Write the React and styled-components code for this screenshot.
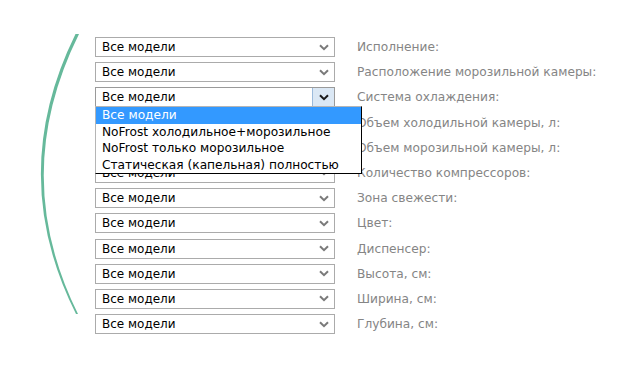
import React from "react";
import styled, { createGlobalStyle } from "styled-components";

const Global = createGlobalStyle`
  html, body { margin: 0; padding: 0; background: #fff; }
  body { width: 627px; height: 378px; overflow: hidden; }
`;

const Page = styled.div`
  display: flex;
  padding-top: 32px;
`;

const ArcColumn = styled.div`
  width: 95px;
  flex: none;
`;

const Form = styled.div`
  display: flex;
  flex-direction: column;
  gap: 5.2px;
  margin-top: 5px;
`;

const Row = styled.div`
  display: flex;
  align-items: center;
  height: 20px;
  position: relative;
`;

const SelectBox = styled.div`
  box-sizing: border-box;
  width: 240px;
  height: 20px;
  border: 1px solid ${(p) => (p.$open ? "#9a9a9a" : "#ababab")};
  background: #fff;
  display: flex;
  align-items: stretch;
  font-family: "DejaVu Sans", Verdana, sans-serif;
  font-size: 12px;
  color: #000;
`;

const SelectText = styled.div`
  flex: 1;
  padding-left: 6px;
  line-height: 18px;
`;

const ArrowButton = styled.div`
  width: 21px;
  display: flex;
  align-items: center;
  justify-content: center;
  background: ${(p) => (p.$open ? "#dbe8f5" : "transparent")};
  border-left: 1px solid ${(p) => (p.$open ? "#9cbbdc" : "transparent")};
`;

const Label = styled.div`
  margin-left: 22px;
  font-family: "DejaVu Sans", Tahoma, sans-serif;
  font-size: 12.2px;
  color: #858585;
  white-space: nowrap;
`;

const ListBox = styled.ul`
  position: absolute;
  left: 0;
  top: 19px;
  z-index: 2;
  box-sizing: border-box;
  width: 267px;
  margin: 0;
  padding: 0;
  list-style: none;
  background: #fff;
  border-top: 1px solid #b5b5b5;
  border-left: 1px solid #b5b5b5;
  border-right: 1px solid #000;
  border-bottom: 1px solid #000;
  font-family: "DejaVu Sans", Verdana, sans-serif;
  font-size: 12.2px;
`;

const Option = styled.li`
  height: 16.5px;
  line-height: 16px;
  padding-left: 6px;
  color: ${(p) => (p.$active ? "#fff" : "#000")};
  background: ${(p) => (p.$active ? "#3399ff" : "transparent")};
  white-space: nowrap;
`;

const Chevron = ({ dark }) => (
  <svg width="10" height="7" viewBox="0 0 10 7">
    <path
      d="M1 1.2 L5 5.2 L9 1.2"
      fill="none"
      stroke={dark ? "#1a1a1a" : "#7a7a7a"}
      strokeWidth="2"
    />
  </svg>
);

const labels = [
  "Исполнение:",
  "Расположение морозильной камеры:",
  "Система охлаждения:",
  "Объем холодильной камеры, л:",
  "Объем морозильной камеры, л:",
  "Количество компрессоров:",
  "Зона свежести:",
  "Цвет:",
  "Диспенсер:",
  "Высота, см:",
  "Ширина, см:",
  "Глубина, см:",
];

const options = [
  "Все модели",
  "NoFrost холодильное+морозильное",
  "NoFrost только морозильное",
  "Статическая (капельная) полностью",
];

export default function App() {
  return (
    <>
      <Global />
      <Page>
        <ArcColumn>
          <svg width="95" height="286" viewBox="0 32 95 286">
            <path
              d="M79 34 Q9 175 78 314 L76 314 Q6 175 75.5 34 Z"
              fill="#66b99b"
            />
          </svg>
        </ArcColumn>
        <Form>
          {labels.map((label, i) => {
            const open = i === 2;
            return (
              <Row key={label}>
                <SelectBox $open={open}>
                  <SelectText>Все модели</SelectText>
                  <ArrowButton $open={open}>
                    <Chevron dark={open} />
                  </ArrowButton>
                </SelectBox>
                <Label>{label}</Label>
                {open && (
                  <ListBox>
                    {options.map((o, j) => (
                      <Option key={o} $active={j === 0}>
                        {o}
                      </Option>
                    ))}
                  </ListBox>
                )}
              </Row>
            );
          })}
        </Form>
      </Page>
    </>
  );
}
